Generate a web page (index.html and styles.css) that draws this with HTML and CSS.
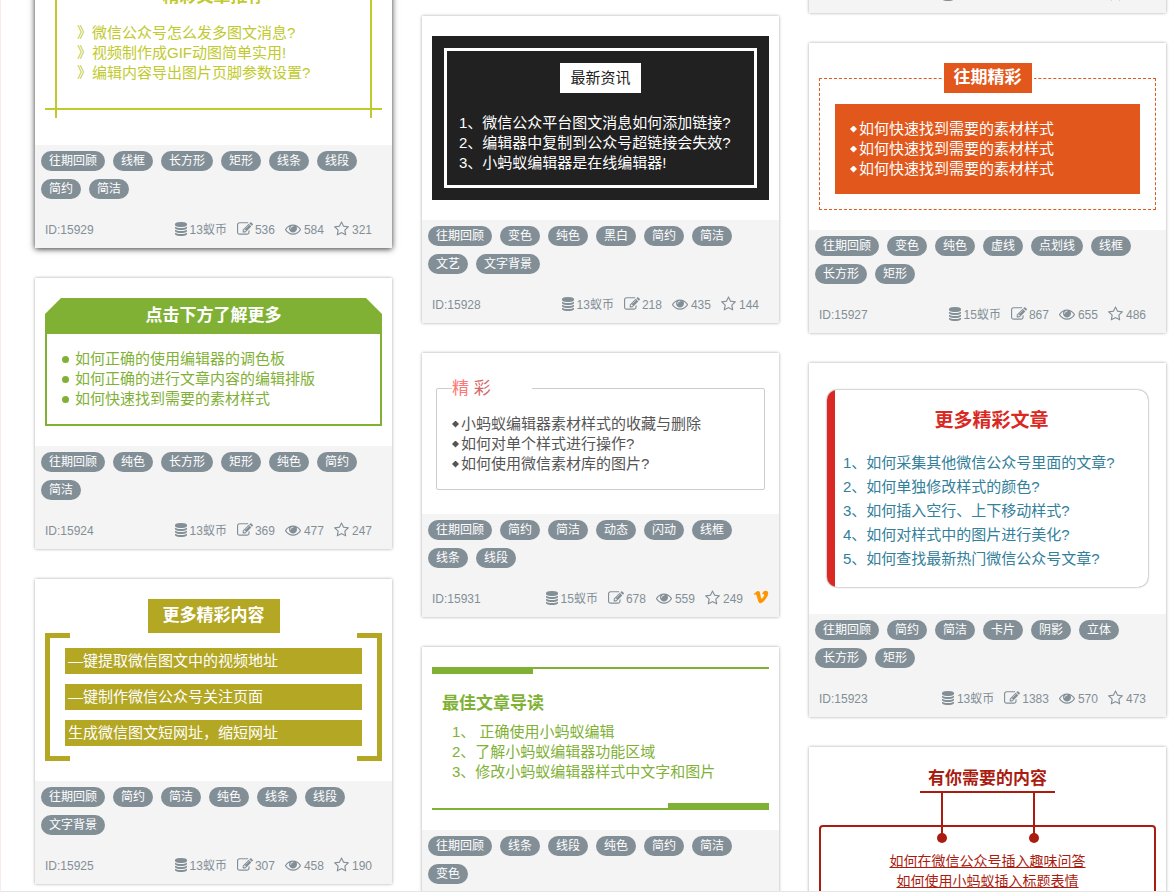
FILE: index.html
```html
<!DOCTYPE html>
<html lang="zh-CN">
<head>
<meta charset="utf-8">
<title>样式素材</title>
<link rel="stylesheet" href="styles.css">
</head>
<body>
<svg class="sprite" aria-hidden="true">
  <symbol id="coins" viewBox="0 0 1536 1792"><path d="M768 768q237 0 443-43t325-127v170q0 69-103 128t-280 93.500-385 34.500-385-34.500-280-93.500-103-128v-170q119 84 325 127t443 43zm0 768q237 0 443-43t325-127v170q0 69-103 128t-280 93.500-385 34.500-385-34.500-280-93.500-103-128v-170q119 84 325 127t443 43zm0-384q237 0 443-43t325-127v170q0 69-103 128t-280 93.500-385 34.500-385-34.500-280-93.500-103-128v-170q119 84 325 127t443 43zm0-1152q208 0 385 34.500t280 93.500 103 128v128q0 69-103 128t-280 93.500-385 34.500-385-34.500-280-93.500-103-128v-128q0-69 103-128t280-93.500 385-34.500z"/></symbol>
  <symbol id="edit" viewBox="0 0 1792 1792"><path d="M888 1184l116-116-152-152-116 116v56h96v96h56zm440-720q-16-16-33 1l-350 350q-17 17-1 33t33-1l350-350q17-17 1-33zm80 594v190q0 119-84.500 203.500t-203.500 84.500h-832q-119 0-203.500-84.500t-84.500-203.500v-832q0-119 84.500-203.500t203.500-84.500h832q63 0 117 25 15 7 18 23 3 17-9 29l-49 49q-14 14-32 8-23-6-45-6h-832q-66 0-113 47t-47 113v832q0 66 47 113t113 47h832q66 0 113-47t47-113v-126q0-13 9-22l64-64q15-15 35-7t20 29zm-96-738l288 288-672 672h-288v-288zm444 132l-92 92-288-288 92-92q28-28 68-28t68 28l152 152q28 28 28 68t-28 68z"/></symbol>
  <symbol id="eye" viewBox="0 0 1792 1792"><path d="M1664 960q-152-236-381-353 61 104 61 225 0 185-131.500 316.500t-316.500 131.500-316.500-131.500-131.500-316.500q0-121 61-225-229 117-381 353 133 205 333.500 326.500t434.500 121.500 434.500-121.500 333.500-326.500zm-720-384q0-20-14-34t-34-14q-125 0-214.500 89.500t-89.500 214.500q0 20 14 34t34 14 34-14 14-34q0-86 61-147t147-61q20 0 34-14t14-34zm848 384q0 34-20 69-140 230-376.500 368.500t-499.500 138.500-499.500-139-376.500-368q-20-35-20-69t20-69q140-229 376.500-368t499.500-139 499.500 139 376.500 368q20 35 20 69z"/></symbol>
  <symbol id="star" viewBox="0 0 1664 1792"><path d="M1137 1004l306-297-422-62-189-382-189 382-422 62 306 297-73 421 378-199 377 199zm527-357q0 22-26 48l-363 354 86 500q1 7 1 20 0 50-41 50-19 0-40-12l-449-236-449 236q-22 12-40 12-21 0-31.500-14.500t-10.500-35.500q0-6 2-20l86-500-364-354q-25-27-25-48 0-37 56-46l502-73 225-455q19-41 49-41t49 41l225 455 502 73q56 9 56 46z"/></symbol>
  <symbol id="vip" viewBox="0 0 1792 1792"><path d="M1709 518q-10 236-332 651-333 431-562 431-142 0-240-263-44-160-132-482-72-262-157-262-18 0-127 76l-77-98q24-21 108-96.500t130-115.500q156-138 241-146 95-9 153 55.500t81 203.500q44 287 66 373 55 249 120 249 51 0 154-161 101-161 109-246 13-139-109-139-57 0-121 26 120-393 459-382 251 8 236 326z"/></symbol>
</svg>

<main class="board">
  <div class="column column-first">
    <article class="card card-active">
      <div class="sample">
        <div class="cross">
          <h2 class="heading cross-title">精彩文章推荐</h2>
          <ul class="lines">
            <li>》微信公众号怎么发多图文消息?</li>
            <li>》视频制作成GIF动图简单实用!</li>
            <li>》编辑内容导出图片页脚参数设置?</li>
          </ul>
        </div>
      </div>
      <footer class="info">
        <nav class="tags"><a href="#">往期回顾</a><a href="#">线框</a><a href="#">长方形</a><a href="#">矩形</a><a href="#">线条</a><a href="#">线段</a><a href="#">简约</a><a href="#">简洁</a></nav>
        <div class="meta">
          <span class="id">ID:15929</span>
          <span class="stat"><svg class="coins"><use href="#coins"/></svg>13蚁币</span>
          <span class="stat"><svg class="edit"><use href="#edit"/></svg>536</span>
          <span class="stat"><svg class="eye"><use href="#eye"/></svg>584</span>
          <span class="stat"><svg class="star"><use href="#star"/></svg>321</span>
        </div>
      </footer>
    </article>

    <article class="card">
      <div class="sample">
        <div class="chamfer">
          <h2 class="heading chamfer-title">点击下方了解更多</h2>
          <ul class="lines dots chamfer-body">
            <li>如何正确的使用编辑器的调色板</li>
            <li>如何正确的进行文章内容的编辑排版</li>
            <li>如何快速找到需要的素材样式</li>
          </ul>
        </div>
      </div>
      <footer class="info">
        <nav class="tags"><a href="#">往期回顾</a><a href="#">纯色</a><a href="#">长方形</a><a href="#">矩形</a><a href="#">纯色</a><a href="#">简约</a><a href="#">简洁</a></nav>
        <div class="meta">
          <span class="id">ID:15924</span>
          <span class="stat"><svg class="coins"><use href="#coins"/></svg>13蚁币</span>
          <span class="stat"><svg class="edit"><use href="#edit"/></svg>369</span>
          <span class="stat"><svg class="eye"><use href="#eye"/></svg>477</span>
          <span class="stat"><svg class="star"><use href="#star"/></svg>247</span>
        </div>
      </footer>
    </article>

    <article class="card">
      <div class="sample">
        <div class="bracket">
          <h2 class="heading bracket-title">更多精彩内容</h2>
          <ul class="bracket-body">
            <li>—键提取微信图文中的视频地址</li>
            <li>—键制作微信公众号关注页面</li>
            <li>生成微信图文短网址，缩短网址</li>
          </ul>
        </div>
      </div>
      <footer class="info">
        <nav class="tags"><a href="#">往期回顾</a><a href="#">简约</a><a href="#">简洁</a><a href="#">纯色</a><a href="#">线条</a><a href="#">线段</a><a href="#">文字背景</a></nav>
        <div class="meta">
          <span class="id">ID:15925</span>
          <span class="stat"><svg class="coins"><use href="#coins"/></svg>13蚁币</span>
          <span class="stat"><svg class="edit"><use href="#edit"/></svg>307</span>
          <span class="stat"><svg class="eye"><use href="#eye"/></svg>458</span>
          <span class="stat"><svg class="star"><use href="#star"/></svg>190</span>
        </div>
      </footer>
    </article>
  </div>

  <div class="column column-second">
    <article class="card">
      <div class="sample">
        <div class="dark">
          <div class="dark-frame">
            <h2 class="dark-title">最新资讯</h2>
            <ul class="lines">
              <li>1、微信公众平台图文消息如何添加链接?</li>
              <li>2、编辑器中复制到公众号超链接会失效?</li>
              <li>3、小蚂蚁编辑器是在线编辑器!</li>
            </ul>
          </div>
        </div>
      </div>
      <footer class="info">
        <nav class="tags"><a href="#">往期回顾</a><a href="#">变色</a><a href="#">纯色</a><a href="#">黑白</a><a href="#">简约</a><a href="#">简洁</a><a href="#">文艺</a><a href="#">文字背景</a></nav>
        <div class="meta">
          <span class="id">ID:15928</span>
          <span class="stat"><svg class="coins"><use href="#coins"/></svg>13蚁币</span>
          <span class="stat"><svg class="edit"><use href="#edit"/></svg>218</span>
          <span class="stat"><svg class="eye"><use href="#eye"/></svg>435</span>
          <span class="stat"><svg class="star"><use href="#star"/></svg>144</span>
        </div>
      </footer>
    </article>

    <article class="card">
      <div class="sample">
        <fieldset class="outline">
          <legend><span class="blink">精</span> <span class="blink-dim">彩</span></legend>
          <ul class="lines diamonds">
            <li>小蚂蚁编辑器素材样式的收藏与删除</li>
            <li>如何对单个样式进行操作?</li>
            <li>如何使用微信素材库的图片?</li>
          </ul>
        </fieldset>
      </div>
      <footer class="info">
        <nav class="tags"><a href="#">往期回顾</a><a href="#">简约</a><a href="#">简洁</a><a href="#">动态</a><a href="#">闪动</a><a href="#">线框</a><a href="#">线条</a><a href="#">线段</a></nav>
        <div class="meta meta-vip">
          <span class="id">ID:15931</span>
          <span class="stat"><svg class="coins"><use href="#coins"/></svg>15蚁币</span>
          <span class="stat"><svg class="edit"><use href="#edit"/></svg>678</span>
          <span class="stat"><svg class="eye"><use href="#eye"/></svg>559</span>
          <span class="stat"><svg class="star"><use href="#star"/></svg>249</span>
          <svg class="vip"><use href="#vip"/></svg>
        </div>
      </footer>
    </article>

    <article class="card">
      <div class="sample">
        <div class="rail">
          <h2 class="heading">最佳文章导读</h2>
          <ul class="lines rail-list">
            <li>1、&nbsp;正确使用小蚂蚁编辑</li>
            <li>2、了解小蚂蚁编辑器功能区域</li>
            <li>3、修改小蚂蚁编辑器样式中文字和图片</li>
          </ul>
        </div>
      </div>
      <footer class="info info-open">
        <nav class="tags"><a href="#">往期回顾</a><a href="#">线条</a><a href="#">线段</a><a href="#">纯色</a><a href="#">简约</a><a href="#">简洁</a><a href="#">变色</a></nav>
      </footer>
    </article>
  </div>

  <div class="column column-third">
    <article class="card">
      <footer class="info">
        <div class="meta">
          <span class="stat"><svg class="coins"><use href="#coins"/></svg>13蚁币</span>
          <span class="stat"><svg class="edit"><use href="#edit"/></svg>1024</span>
          <span class="stat"><svg class="eye"><use href="#eye"/></svg>612</span>
          <span class="stat"><svg class="star"><use href="#star"/></svg>305</span>
        </div>
      </footer>
    </article>

    <article class="card">
      <div class="sample">
        <fieldset class="dashed">
          <legend><span class="heading dashed-title">往期精彩</span></legend>
          <ul class="lines diamonds dashed-body">
            <li>如何快速找到需要的素材样式</li>
            <li>如何快速找到需要的素材样式</li>
            <li>如何快速找到需要的素材样式</li>
          </ul>
        </fieldset>
      </div>
      <footer class="info">
        <nav class="tags"><a href="#">往期回顾</a><a href="#">变色</a><a href="#">纯色</a><a href="#">虚线</a><a href="#">点划线</a><a href="#">线框</a><a href="#">长方形</a><a href="#">矩形</a></nav>
        <div class="meta">
          <span class="id">ID:15927</span>
          <span class="stat"><svg class="coins"><use href="#coins"/></svg>15蚁币</span>
          <span class="stat"><svg class="edit"><use href="#edit"/></svg>867</span>
          <span class="stat"><svg class="eye"><use href="#eye"/></svg>655</span>
          <span class="stat"><svg class="star"><use href="#star"/></svg>486</span>
        </div>
      </footer>
    </article>

    <article class="card">
      <div class="sample">
        <div class="panel">
          <h2 class="panel-title">更多精彩文章</h2>
          <ul class="lines panel-list">
            <li>1、如何采集其他微信公众号里面的文章?</li>
            <li>2、如何单独修改样式的颜色?</li>
            <li>3、如何插入空行、上下移动样式?</li>
            <li>4、如何对样式中的图片进行美化?</li>
            <li>5、如何查找最新热门微信公众号文章?</li>
          </ul>
        </div>
      </div>
      <footer class="info">
        <nav class="tags"><a href="#">往期回顾</a><a href="#">简约</a><a href="#">简洁</a><a href="#">卡片</a><a href="#">阴影</a><a href="#">立体</a><a href="#">长方形</a><a href="#">矩形</a></nav>
        <div class="meta">
          <span class="id">ID:15923</span>
          <span class="stat"><svg class="coins"><use href="#coins"/></svg>13蚁币</span>
          <span class="stat"><svg class="edit"><use href="#edit"/></svg>1383</span>
          <span class="stat"><svg class="eye"><use href="#eye"/></svg>570</span>
          <span class="stat"><svg class="star"><use href="#star"/></svg>473</span>
        </div>
      </footer>
    </article>

    <article class="card">
      <div class="sample">
        <div class="hanging">
          <h2 class="heading hanging-title">有你需要的内容</h2>
          <svg class="hooks" viewBox="0 0 102 50"><path d="M4 0h2v42h-2zM96 0h2v42h-2z"/><circle cx="5" cy="45" r="5"/><circle cx="97" cy="45" r="5"/></svg>
          <div class="hanging-body">
            <a href="#">如何在微信公众号插入趣味问答</a>
            <a href="#">如何使用小蚂蚁插入标题表情</a>
          </div>
        </div>
      </div>
    </article>
  </div>
</main>
</body>
</html>
```
FILE: styles.css
```css
* {
  box-sizing: border-box;
}

body {
  margin: 0;
  background: #fff;
  font-family: "Liberation Sans", "Noto Sans CJK SC", sans-serif;
  font-size: 15px;
  line-height: 20px;
  overflow: hidden;
}

h2,
ul,
fieldset {
  margin: 0;
  padding: 0;
}

ul {
  list-style: none;
}

.sprite {
  display: none;
}

/* Board */
.board {
  display: flex;
  align-items: flex-start;
  gap: 30px;
  height: calc(100vh - 4px);
  padding: 0 5px 0 34px;
  border-left: 1px solid #f8ecea;
  border-bottom: 1px solid #e5e5e5;
  overflow: hidden;
}

.column {
  flex: 1;
  min-width: 0;
  display: flex;
  flex-direction: column;
  gap: 30px;
}

.column-first {
  margin-top: -76px;
}

.column-second {
  margin-top: 16px;
}

.column-third {
  margin-top: -36px;
}

.card {
  background: #fff;
  box-shadow: 0 0 3px rgba(0, 0, 0, 0.35);
}

.card-active {
  box-shadow: 0 1px 6px rgba(0, 0, 0, 0.8);
}

.sample {
  padding: 20px 10px;
}

.heading {
  font-size: 17px;
  font-weight: bold;
}

.lines li {
  white-space: nowrap;
}

/* Card footer */
.info {
  background: #f4f4f4;
  color: #838f97;
  font-size: 12px;
}

.info-open {
  padding-bottom: 48px;
}

.tags {
  display: flex;
  flex-wrap: wrap;
  gap: 8px;
  padding: 6px 6px 0;
}

.tags a {
  padding: 0 8px;
  border-radius: 10px;
  background: #838f97;
  color: #fff;
  text-decoration: none;
}

.meta {
  display: flex;
  justify-content: flex-end;
  align-items: center;
  gap: 10px;
  padding: 21px 20px 8px 10px;
}

.meta-vip {
  padding-right: 10px;
}

.id {
  margin-right: auto;
}

.stat {
  display: flex;
  align-items: center;
}

.meta svg {
  height: 16px;
  margin-bottom: 2px;
  fill: currentColor;
}

.meta .coins {
  width: 12px;
  height: 14px;
  margin-right: 3px;
}

.meta .edit {
  width: 16px;
  margin-right: 2px;
}

.meta .eye {
  width: 16px;
  margin-right: 3px;
}

.meta .star {
  width: 15px;
  margin-right: 3px;
}

.meta .vip {
  width: 16px;
  margin-bottom: 4px;
  fill: #ff9600;
}

/* Bullets */
.dots li,
.diamonds li {
  display: flex;
  align-items: center;
}

.dots li::before {
  content: "";
  width: 7px;
  height: 7px;
  margin-right: 6px;
  border-radius: 50%;
  background: currentColor;
}

.diamonds li::before {
  content: "";
  width: 7px;
  height: 7px;
  margin-right: 2px;
  background: currentColor;
  clip-path: polygon(50% 0, 100% 50%, 50% 100%, 0 50%);
}

/* Crossed lines */
.cross {
  margin-bottom: 7px;
  padding: 40px 32px 35px;
  color: #c0ca2c;
  background:
    linear-gradient(#c0ca2c, #c0ca2c) left 10px top / 2px 100% no-repeat,
    linear-gradient(#c0ca2c, #c0ca2c) right 10px top / 2px 100% no-repeat,
    linear-gradient(#c0ca2c, #c0ca2c) left top 8px / 100% 2px no-repeat,
    linear-gradient(#c0ca2c, #c0ca2c) left bottom 8px / 100% 2px no-repeat;
}

.cross-title {
  margin-bottom: 13px;
  line-height: 26px;
  text-align: center;
}

/* Cut corners */
.chamfer {
  color: #80b135;
}

.chamfer-title {
  background: #80b135;
  color: #fff;
  line-height: 36px;
  text-align: center;
  clip-path: polygon(16px 0, calc(100% - 16px) 0, 100% 16px, 100% 100%, 0 100%, 0 16px);
}

.chamfer-body {
  padding: 15px;
  border: 2px solid #80b135;
  border-top: 0;
}

/* Brackets */
.bracket {
  display: flex;
  flex-direction: column;
  color: #fff;
}

.bracket-title {
  align-self: center;
  padding: 0 15px;
  background: #b4a724;
  line-height: 34px;
}

.bracket-body {
  display: grid;
  gap: 10px;
  padding: 15px;
  border: solid #b4a724;
  border-width: 0 5px;
  background:
    linear-gradient(#b4a724, #b4a724) left top / 20px 5px no-repeat,
    linear-gradient(#b4a724, #b4a724) right top / 20px 5px no-repeat,
    linear-gradient(#b4a724, #b4a724) left bottom / 20px 5px no-repeat,
    linear-gradient(#b4a724, #b4a724) right bottom / 20px 5px no-repeat;
}

.bracket-body li {
  padding: 0 3px;
  background: #b4a724;
  line-height: 26px;
  white-space: nowrap;
}

/* Black board */
.dark {
  padding: 12px;
  background: #212121;
  color: #fff;
}

.dark-frame {
  display: flex;
  flex-direction: column;
  gap: 20px;
  padding: 12px;
  border: 3px solid #fff;
}

.dark-title {
  align-self: center;
  padding: 0 10px;
  background: #fff;
  color: #212121;
  font-size: 15px;
  font-weight: normal;
  line-height: 30px;
}

/* Outline with caption */
.outline {
  margin: 0 4px 4px;
  padding: 10px 15px 15px;
  border: 1px solid #ccc;
  border-radius: 2px;
  color: #555;
}

.outline legend {
  width: 80px;
  padding: 0;
  font-size: 17px;
  line-height: 31px;
}

.blink {
  color: #ff7676;
}

.blink-dim {
  color: #d26a6a;
}

/* Thick and thin rules */
.rail {
  display: grid;
  gap: 5px;
  padding: 24px 10px 28px;
  color: #80b135;
  background:
    linear-gradient(#80b135, #80b135) left top / 100% 2px no-repeat,
    linear-gradient(#80b135, #80b135) left top / 30% 7px no-repeat,
    linear-gradient(#80b135, #80b135) right bottom / 100% 2px no-repeat,
    linear-gradient(#80b135, #80b135) right bottom / 30% 7px no-repeat;
}

.rail .heading {
  line-height: 26px;
}

.rail-list {
  padding-left: 10px;
}

/* Dashed frame */
.dashed {
  padding: 11px 15px 15px;
  border: 1px dashed #e2571c;
}

.dashed legend {
  margin: 0 auto;
  padding: 0 2px;
}

.dashed-title {
  display: block;
  padding: 0 10px;
  background: #e2571c;
  color: #fff;
  line-height: 30px;
}

.dashed-body {
  padding: 15px;
  background: #e2571c;
  color: #fff;
}

/* Panel with side bar */
.panel {
  margin: 7px 8px;
  padding: 16px 8px 16px 16px;
  border-radius: 10px;
  background: linear-gradient(#da2822, #da2822) left top / 8px 100% no-repeat;
  box-shadow: 0 0 2px rgba(0, 0, 0, 0.6);
  color: #32809a;
}

.panel-title {
  margin-bottom: 15px;
  color: #da2822;
  font-size: 19px;
  line-height: 30px;
  text-align: center;
}

.panel-list {
  line-height: 24px;
}

/* Hanging sign */
.hanging {
  display: flex;
  flex-direction: column;
  align-items: center;
  color: #ab1c10;
}

.hanging-title {
  padding: 0 8px;
  border-bottom: 2px solid #ab1c10;
  line-height: 24px;
}

.hooks {
  width: 102px;
  height: 50px;
  fill: #ab1c10;
}

.hanging-body {
  display: flex;
  flex-direction: column;
  align-items: center;
  align-self: stretch;
  margin-top: -18px;
  padding: 24px 15px;
  border: 2px solid #ab1c10;
  border-radius: 4px;
  font-size: 14px;
}

.hanging-body a {
  color: #ab1c10;
}
```
